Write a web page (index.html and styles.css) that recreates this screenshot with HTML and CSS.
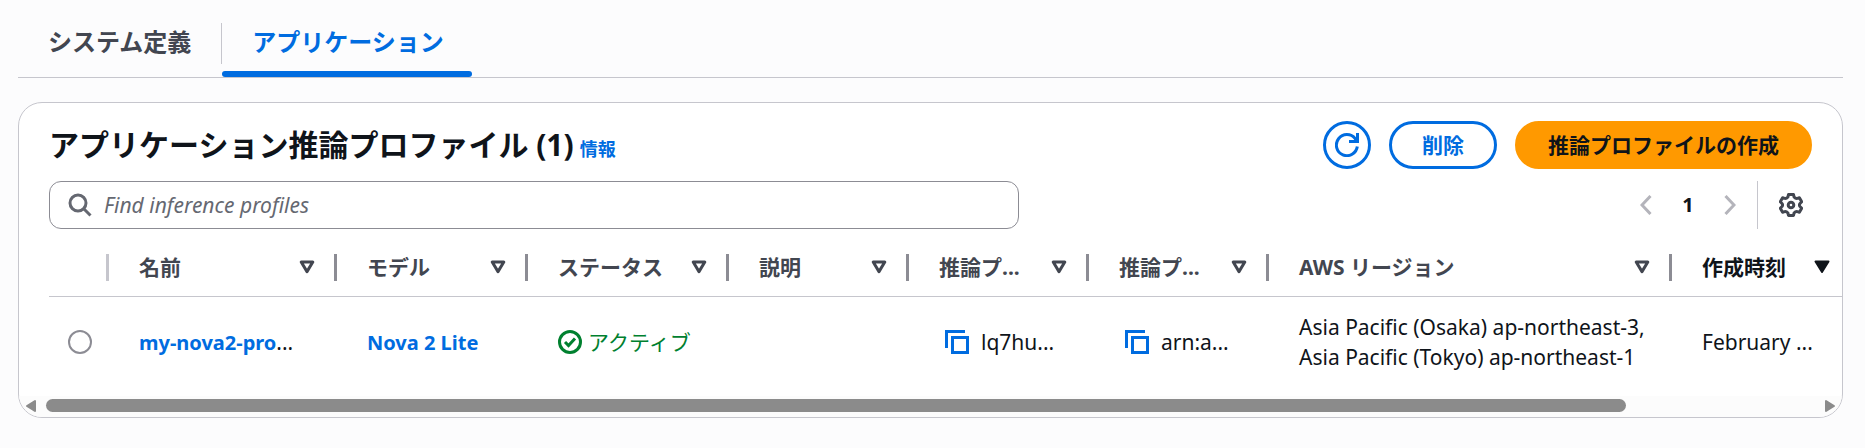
FILE: index.html
```html
<!DOCTYPE html>
<html lang="ja">
<head>
  <meta charset="UTF-8">
  <meta name="viewport" content="width=device-width, initial-scale=1.0">
  <title>推論プロファイル</title>
  <link rel="stylesheet" href="styles.css">
</head>
<body>
  <!-- Shared icons -->
  <svg class="sprite" aria-hidden="true">
    <symbol id="sort" viewBox="0 0 16 14">
      <path d="M2.2 2h11.6L8 11.6z" fill="none" stroke="currentColor" stroke-width="3" stroke-linejoin="round"/>
    </symbol>
    <symbol id="sort-filled" viewBox="0 0 16 14">
      <path d="M1.5 1.5h13L8 12z" fill="currentColor" stroke="currentColor" stroke-width="2" stroke-linejoin="round"/>
    </symbol>
    <symbol id="copy" viewBox="0 0 24 24">
      <path d="M1.500 18V1.500H20M7.500 7.500h15v15h-15z" fill="none" stroke="currentColor" stroke-width="3"/>
    </symbol>
  </svg>

  <div class="tabs" role="tablist">
    <button type="button" class="tab" role="tab" aria-selected="false">システム定義</button>
    <button type="button" class="tab active" role="tab" aria-selected="true">アプリケーション</button>
  </div>

  <main class="container">
    <div class="header">
      <div class="title">
        <h2>アプリケーション推論プロファイル (1)</h2>
        <a href="#" class="info">情報</a>
      </div>
      <div class="actions">
        <button type="button" class="btn btn-icon" aria-label="更新">
          <svg width="24" height="24" viewBox="0 0 24 24" fill="none" stroke="currentColor" stroke-width="3">
            <path d="M22.300 13.500A10.500 10.500 0 1 1 20.200 5.700L22 8.500"/>
            <path d="M22.500 0v8.500H14"/>
          </svg>
        </button>
        <button type="button" class="btn">削除</button>
        <button type="button" class="btn btn-primary">推論プロファイルの作成</button>
      </div>
    </div>

    <div class="tools">
      <label class="search">
        <svg width="24" height="24" viewBox="0 0 24 24" fill="none" stroke="currentColor" stroke-width="3" aria-hidden="true">
          <circle cx="10" cy="10" r="8"/>
          <path d="M15.500 15.500l7 7"/>
        </svg>
        <input type="search" placeholder="Find inference profiles" aria-label="Find inference profiles">
      </label>
      <div class="pagination">
        <button type="button" class="page-arrow" aria-label="前のページ" disabled>
          <svg width="12" height="20" viewBox="0 0 12 20"><path d="M10.500 1L2 10l8.500 9" fill="none" stroke="currentColor" stroke-width="3"/></svg>
        </button>
        <button type="button" class="page-number" aria-current="page">1</button>
        <button type="button" class="page-arrow" aria-label="次のページ" disabled>
          <svg width="12" height="20" viewBox="0 0 12 20"><path d="M1.500 1L10 10l-8.500 9" fill="none" stroke="currentColor" stroke-width="3"/></svg>
        </button>
      </div>
      <button type="button" class="settings" aria-label="設定">
        <svg width="24" height="24" viewBox="0 0 24 24" fill="none" stroke="currentColor" stroke-width="3" stroke-linejoin="round">
          <path d="M9.500 1.500h5l.6 2.600q1.500 1.700 3.300 1.300l2-.6 2.300 4-1.900 1.900q-.7 1.300 0 2.600l1.900 1.900-2.300 4-2-.6q-1.800-.4-3.300 1.300l-.6 2.600h-5l-.6-2.600q-1.500-1.700-3.300-1.300l-2 .6-2.300-4 1.900-1.900q.7-1.300 0-2.600L1.300 8.800l2.300-4 2 .6q1.800.4 3.300-1.300z"/>
          <circle cx="12" cy="12" r="2.800"/>
        </svg>
      </button>
    </div>

    <div class="table-wrap">
      <table>
        <colgroup>
          <col class="col-select">
          <col class="col-name">
          <col class="col-model">
          <col class="col-status">
          <col class="col-short">
          <col class="col-short">
          <col class="col-short">
          <col class="col-region">
          <col>
        </colgroup>
        <thead>
          <tr>
            <th></th>
            <th><div class="th"><span>名前</span><svg><use href="#sort"/></svg></div></th>
            <th><div class="th"><span>モデル</span><svg><use href="#sort"/></svg></div></th>
            <th><div class="th"><span>ステータス</span><svg><use href="#sort"/></svg></div></th>
            <th><div class="th"><span>説明</span><svg><use href="#sort"/></svg></div></th>
            <th><div class="th"><span>推論プ...</span><svg><use href="#sort"/></svg></div></th>
            <th><div class="th"><span>推論プ...</span><svg><use href="#sort"/></svg></div></th>
            <th><div class="th"><span>AWS リージョン</span><svg><use href="#sort"/></svg></div></th>
            <th class="sorted" aria-sort="descending"><div class="th"><span>作成時刻</span><svg><use href="#sort-filled"/></svg></div></th>
          </tr>
        </thead>
        <tbody>
          <tr>
            <td class="select"><input type="radio" name="profile" aria-label="my-nova2-pro"></td>
            <td><a href="#">my-nova2-pro</a>...</td>
            <td><a href="#">Nova 2 Lite</a></td>
            <td>
              <div class="status">
                <svg width="24" height="24" viewBox="0 0 24 24" fill="none" stroke="currentColor" stroke-width="3" aria-hidden="true">
                  <circle cx="12" cy="12" r="10.500"/>
                  <path d="M7 12l3.500 3.500L17 8.500"/>
                </svg>
                アクティブ
              </div>
            </td>
            <td></td>
            <td><div class="copy"><button type="button" aria-label="コピー"><svg width="24" height="24"><use href="#copy"/></svg></button>lq7hu...</div></td>
            <td><div class="copy"><button type="button" aria-label="コピー"><svg width="24" height="24"><use href="#copy"/></svg></button>arn:a...</div></td>
            <td>Asia Pacific (Osaka) ap-northeast-3,<br>Asia Pacific (Tokyo) ap-northeast-1</td>
            <td>February ...</td>
          </tr>
        </tbody>
      </table>
    </div>

    <div class="scrollbar" aria-hidden="true">
      <svg width="12" height="14" viewBox="0 0 12 14"><path d="M10 2v10L2 7z" fill="currentColor" stroke="currentColor" stroke-width="2" stroke-linejoin="round"/></svg>
      <div class="track"><div class="thumb"></div></div>
      <svg width="12" height="14" viewBox="0 0 12 14"><path d="M2 2v10l8-5z" fill="currentColor" stroke="currentColor" stroke-width="2" stroke-linejoin="round"/></svg>
    </div>
  </main>
</body>
</html>
```
FILE: styles.css
```css
* {
  margin: 0;
  padding: 0;
  box-sizing: border-box;
}

body {
  font-family: "Noto Sans", "Noto Sans CJK JP", sans-serif;
  font-size: 21px;
  line-height: 30px;
  color: #0f141a;
  background: #fcfcfd;
  padding: 14px 22px 30px 18px;
}

button,
input {
  font: inherit;
  color: inherit;
}

button {
  background: none;
  border: none;
  cursor: pointer;
}

svg {
  display: block;
  flex: none;
}

a {
  color: #006ce0;
  font-weight: 700;
  text-decoration: none;
}

.sprite {
  position: absolute;
  width: 0;
  height: 0;
}

/* Tabs */
.tabs {
  display: flex;
  gap: 3px;
  border-bottom: 1px solid #c6c6cd;
}

.tab {
  position: relative;
  height: 63px;
  padding: 0 28px 8px 30px;
  font-size: 24px;
  font-weight: 700;
  color: #424650;
}

.tab + .tab::before {
  content: "";
  position: absolute;
  left: -1px;
  top: 9px;
  width: 1px;
  height: 41px;
  background: #c6c6cd;
}

.tab.active {
  color: #006ce0;
}

.tab.active::after {
  content: "";
  position: absolute;
  left: 0;
  right: 0;
  bottom: 0;
  height: 6px;
  border-radius: 3px;
  background: #006ce0;
}

/* Card */
.container {
  margin-top: 24px;
  border: 1px solid #c6c6cd;
  border-radius: 24px;
  background: #fff;
  overflow: hidden;
}

.header {
  display: flex;
  justify-content: space-between;
  align-items: center;
  padding: 18px 30px 12px;
}

.title {
  display: flex;
  align-items: baseline;
  gap: 6px;
}

h2 {
  font-size: 30px;
  line-height: 36px;
}

.info {
  font-size: 18px;
}

.actions {
  display: flex;
  gap: 18px;
}

.btn {
  height: 48px;
  padding: 0 30px;
  border: 3px solid #006ce0;
  border-radius: 24px;
  background: #fff;
  color: #006ce0;
  font-size: 21px;
  font-weight: 700;
}

.btn-icon {
  width: 48px;
  padding: 0 9px;
}

.btn-primary {
  border-color: #ff9900;
  background: #ff9900;
  color: #0f141a;
}

/* Search and pagination */
.tools {
  display: flex;
  align-items: center;
  padding: 0 30px;
}

.search {
  display: flex;
  align-items: center;
  gap: 12px;
  width: 55%;
  height: 48px;
  padding: 0 18px;
  border: 1px solid #8c8c94;
  border-radius: 12px;
  color: #656871;
}

.search input {
  flex: 1;
  border: none;
  outline: none;
  background: none;
}

.search input::placeholder {
  color: #656871;
  font-style: italic;
}

.pagination {
  display: flex;
  align-items: center;
  margin-left: auto;
}

.page-arrow {
  padding: 0 21px;
  color: #b4b4bb;
}

.page-number {
  width: 30px;
  font-size: 20px;
  font-weight: 700;
}

.settings {
  height: 48px;
  padding: 0 9px 0 21px;
  border-left: 1px solid #c6c6cd;
  color: #424650;
}

/* Table */
.table-wrap {
  padding-left: 30px;
}

table {
  width: 100%;
  table-layout: fixed;
  border-collapse: collapse;
}

.col-select { width: 60px; }
.col-name { width: 228px; }
.col-model { width: 191px; }
.col-status { width: 201px; }
.col-short { width: 180px; }
.col-region { width: 403px; }

th {
  height: 67px;
  padding: 10px 22px 0 30px;
  border-bottom: 1px solid #c6c6cd;
  background: linear-gradient(#8c8c94, #8c8c94) right 25px / 3px 27px no-repeat;
  color: #424650;
  text-align: left;
}

th:first-child {
  background-image: linear-gradient(#c6c6cd, #c6c6cd);
}

th:last-child {
  padding-right: 12px;
  background: none;
}

th.sorted {
  color: #0f141a;
}

.th {
  display: flex;
  justify-content: space-between;
  align-items: center;
}

.th svg {
  width: 16px;
  height: 14px;
}

td {
  height: 92px;
  padding: 0 0 0 30px;
  white-space: nowrap;
}

td a {
  font-size: 20px;
}

td.select {
  padding-left: 19px;
}

.select input {
  display: block;
  appearance: none;
  width: 24px;
  height: 24px;
  border: 2px solid #8c8c94;
  border-radius: 50%;
}

.status,
.copy {
  display: flex;
  align-items: center;
  gap: 6px;
}

.status {
  color: #00802f;
}

.copy {
  gap: 12px;
  padding-left: 6px;
}

.copy button {
  color: #006ce0;
}

/* Scrollbar */
.scrollbar {
  display: flex;
  align-items: center;
  gap: 9px;
  height: 21px;
  margin-top: 8px;
  padding: 0 6px 2px;
  background: #fcfcfc;
  color: #8b8b8b;
}

.track {
  flex: 1;
}

.thumb {
  width: 89.3%;
  height: 13px;
  border-radius: 7px;
  background: #8b8b8b;
}
```
